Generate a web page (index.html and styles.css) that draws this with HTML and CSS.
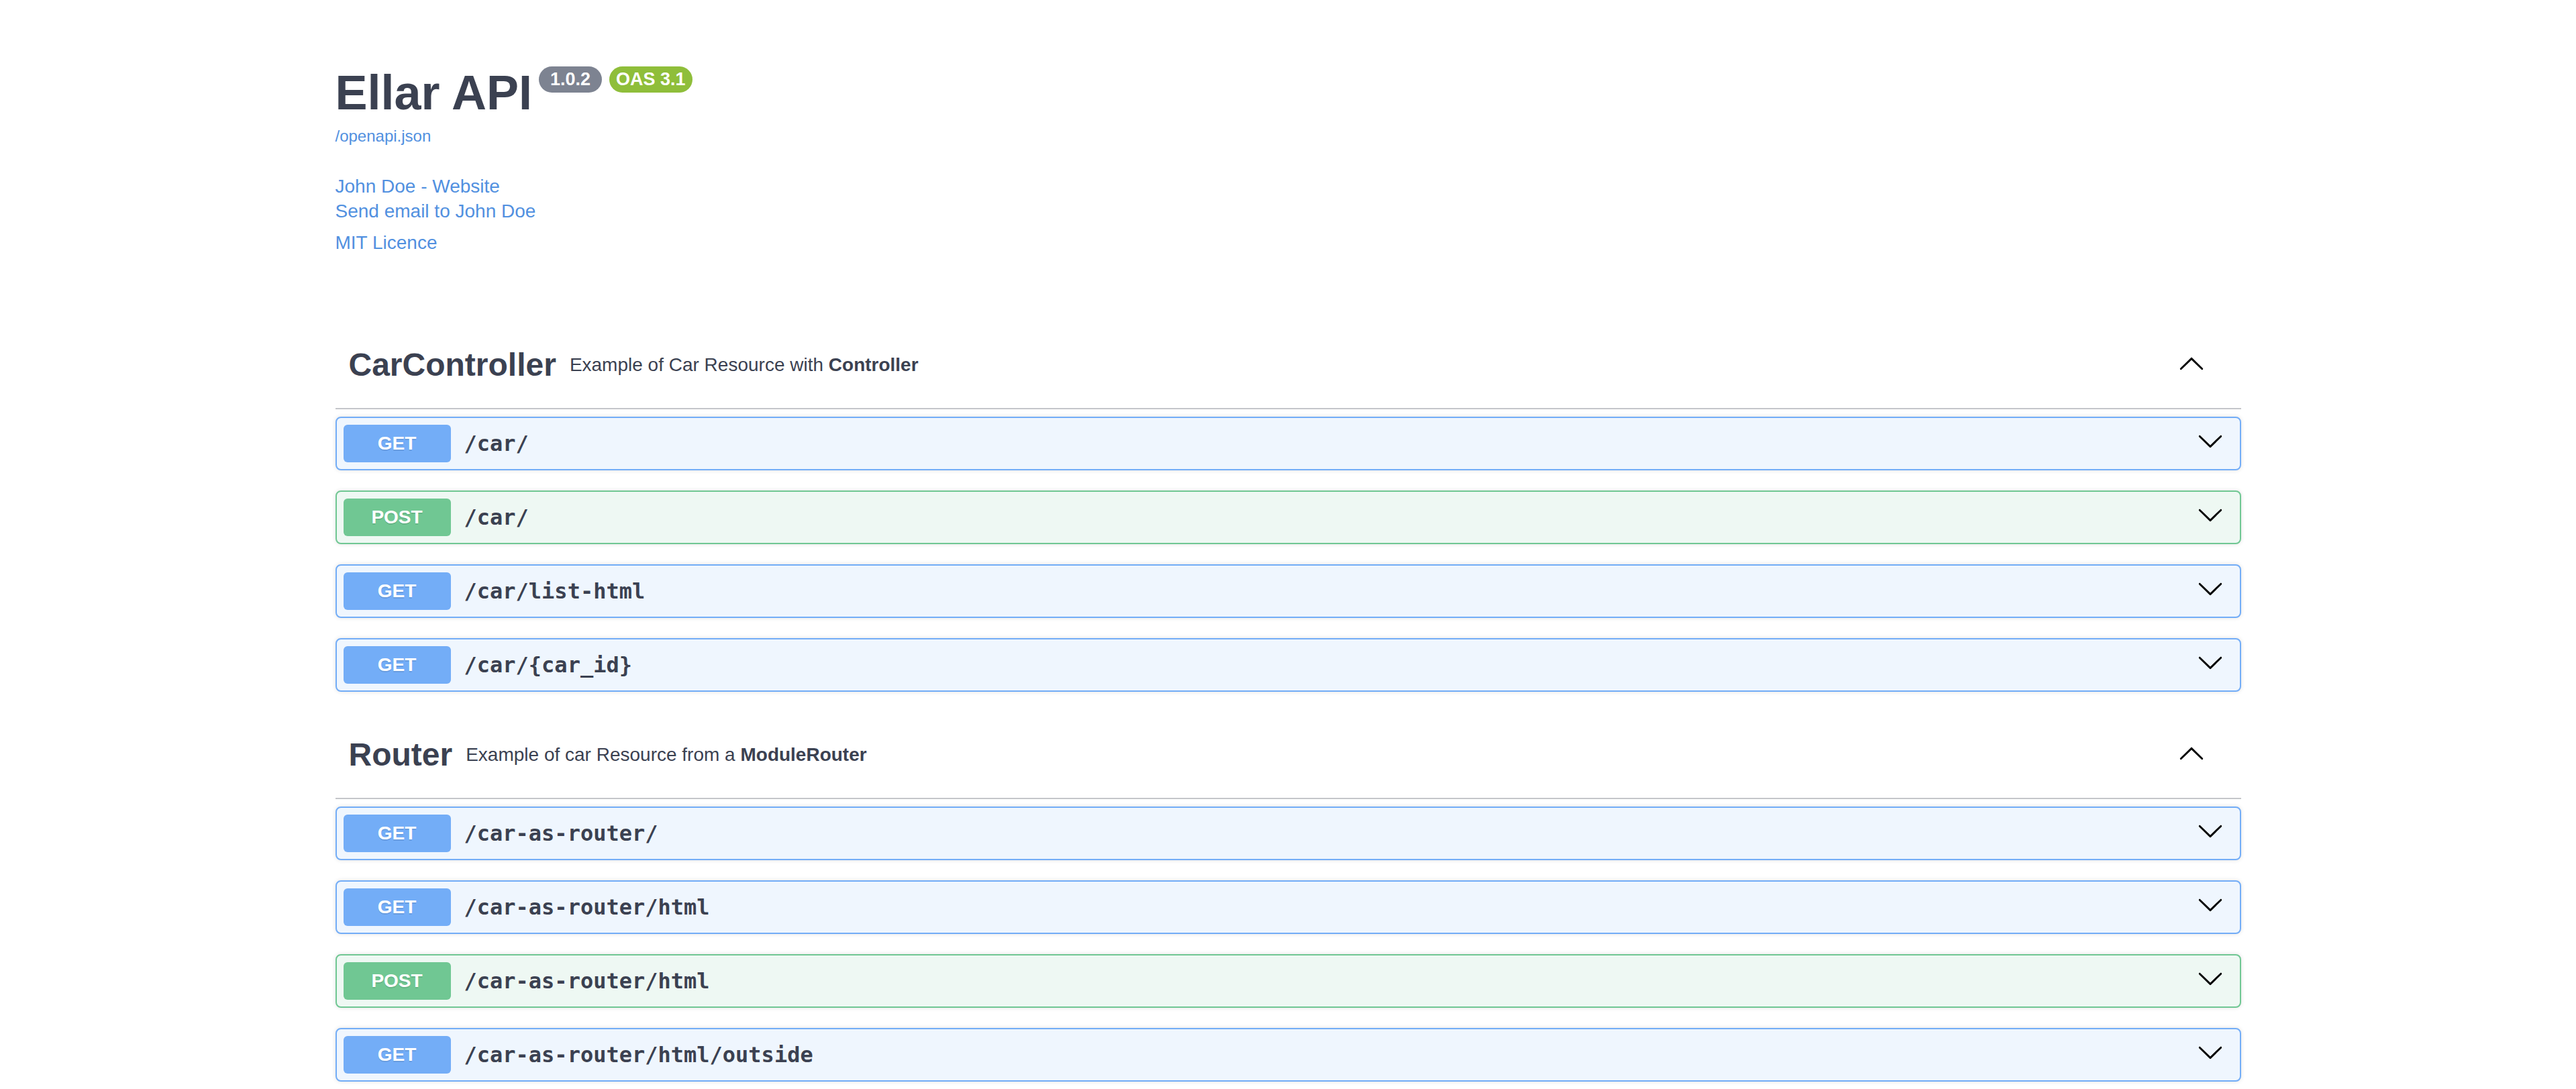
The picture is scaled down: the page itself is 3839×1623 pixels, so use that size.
FILE: index.html
```html
<!DOCTYPE html>
<html lang="en">
<head>
<meta charset="utf-8">
<title>Ellar API</title>
<link rel="stylesheet" href="styles.css">
</head>
<body>
<div class="wrapper">
  <section class="info">
    <div class="title-row">
      <h1 class="title">Ellar API</h1>
      <span class="pill pill-version">1.0.2</span>
      <span class="pill pill-oas">OAS 3.1</span>
    </div>
    <a class="base-url" href="#">/openapi.json</a>
    <div class="contact">
      <a class="link" href="#">John Doe - Website</a>
      <a class="link" href="#">Send email to John Doe</a>
    </div>
    <div class="license">
      <a class="link" href="#">MIT Licence</a>
    </div>
  </section>

  <section class="tag-section">
    <h3 class="tag">
      <span class="tag-name">CarController</span>
      <small class="tag-desc">Example of Car Resource with <b>Controller</b></small>
      <svg class="arrow-up" viewBox="0 0 20 20" width="40" height="40"><path d="M2.582 13.891c-.272.268-.709.268-.979 0s-.271-.701 0-.969l7.908-7.83c.27-.268.707-.268.979 0l7.908 7.83c.27.268.27.701 0 .969-.271.268-.709.268-.979 0L10 6.75l-7.418 7.141z"/></svg>
    </h3>
    <div class="ops">
      <div class="opblock get"><span class="method">GET</span><span class="path">/car/</span><svg class="arrow" viewBox="0 0 20 20" width="40" height="40"><path d="M17.418 6.109c.272-.268.709-.268.979 0s.271.701 0 .969l-7.908 7.83c-.27.268-.707.268-.979 0l-7.908-7.83c-.27-.268-.27-.701 0-.969.271-.268.709-.268.979 0L10 13.25l7.418-7.141z"/></svg></div>
      <div class="opblock post"><span class="method">POST</span><span class="path">/car/</span><svg class="arrow" viewBox="0 0 20 20" width="40" height="40"><path d="M17.418 6.109c.272-.268.709-.268.979 0s.271.701 0 .969l-7.908 7.83c-.27.268-.707.268-.979 0l-7.908-7.83c-.27-.268-.27-.701 0-.969.271-.268.709-.268.979 0L10 13.25l7.418-7.141z"/></svg></div>
      <div class="opblock get"><span class="method">GET</span><span class="path">/car/list-html</span><svg class="arrow" viewBox="0 0 20 20" width="40" height="40"><path d="M17.418 6.109c.272-.268.709-.268.979 0s.271.701 0 .969l-7.908 7.83c-.27.268-.707.268-.979 0l-7.908-7.83c-.27-.268-.27-.701 0-.969.271-.268.709-.268.979 0L10 13.25l7.418-7.141z"/></svg></div>
      <div class="opblock get"><span class="method">GET</span><span class="path">/car/{car_id}</span><svg class="arrow" viewBox="0 0 20 20" width="40" height="40"><path d="M17.418 6.109c.272-.268.709-.268.979 0s.271.701 0 .969l-7.908 7.83c-.27.268-.707.268-.979 0l-7.908-7.83c-.27-.268-.27-.701 0-.969.271-.268.709-.268.979 0L10 13.25l7.418-7.141z"/></svg></div>
    </div>
  </section>

  <section class="tag-section">
    <h3 class="tag">
      <span class="tag-name">Router</span>
      <small class="tag-desc">Example of car Resource from a <b>ModuleRouter</b></small>
      <svg class="arrow-up" viewBox="0 0 20 20" width="40" height="40"><path d="M2.582 13.891c-.272.268-.709.268-.979 0s-.271-.701 0-.969l7.908-7.83c.27-.268.707-.268.979 0l7.908 7.83c.27.268.27.701 0 .969-.271.268-.709.268-.979 0L10 6.75l-7.418 7.141z"/></svg>
    </h3>
    <div class="ops">
      <div class="opblock get"><span class="method">GET</span><span class="path">/car-as-router/</span><svg class="arrow" viewBox="0 0 20 20" width="40" height="40"><path d="M17.418 6.109c.272-.268.709-.268.979 0s.271.701 0 .969l-7.908 7.83c-.27.268-.707.268-.979 0l-7.908-7.83c-.27-.268-.27-.701 0-.969.271-.268.709-.268.979 0L10 13.25l7.418-7.141z"/></svg></div>
      <div class="opblock get"><span class="method">GET</span><span class="path">/car-as-router/html</span><svg class="arrow" viewBox="0 0 20 20" width="40" height="40"><path d="M17.418 6.109c.272-.268.709-.268.979 0s.271.701 0 .969l-7.908 7.83c-.27.268-.707.268-.979 0l-7.908-7.83c-.27-.268-.27-.701 0-.969.271-.268.709-.268.979 0L10 13.25l7.418-7.141z"/></svg></div>
      <div class="opblock post"><span class="method">POST</span><span class="path">/car-as-router/html</span><svg class="arrow" viewBox="0 0 20 20" width="40" height="40"><path d="M17.418 6.109c.272-.268.709-.268.979 0s.271.701 0 .969l-7.908 7.83c-.27.268-.707.268-.979 0l-7.908-7.83c-.27-.268-.27-.701 0-.969.271-.268.709-.268.979 0L10 13.25l7.418-7.141z"/></svg></div>
      <div class="opblock get"><span class="method">GET</span><span class="path">/car-as-router/html/outside</span><svg class="arrow" viewBox="0 0 20 20" width="40" height="40"><path d="M17.418 6.109c.272-.268.709-.268.979 0s.271.701 0 .969l-7.908 7.83c-.27.268-.707.268-.979 0l-7.908-7.83c-.27-.268-.27-.701 0-.969.271-.268.709-.268.979 0L10 13.25l7.418-7.141z"/></svg></div>
    </div>
  </section>
</div>
</body>
</html>
```

FILE: styles.css
```css
html {
  overflow: hidden;
  background: #ffffff;
}

body {
  margin: 0;
  font-family: "Liberation Sans", Arial, Helvetica, sans-serif;
  color: #3b4151;
  background: #ffffff;
}

.wrapper {
  max-width: 2920px;
  margin: 0 auto;
  padding: 0 40px;
  box-sizing: border-box;
}

/* ---------- info ---------- */
.info {
  padding-top: 99px;
  margin-bottom: 100px;
  display: flex;
  flex-direction: column;
  align-items: flex-start;
}

.title-row {
  display: flex;
  align-items: flex-start;
  height: 75px;
}

.title {
  margin: 3px 0 0 0;
  font-size: 72px;
  line-height: 72px;
  font-weight: 700;
  color: #3b4151;
}

.pill {
  height: 39px;
  line-height: 39px;
  border-radius: 20px;
  color: #ffffff;
  font-size: 27px;
  font-weight: 700;
  padding: 0 10px;
}

.pill-version {
  background: #7d8391;
  padding: 0 17px;
  margin-left: 10px;
}

.pill-oas {
  background: #8fbe3a;
  margin-left: 11px;
}

.base-url {
  margin-top: 17px;
  font-size: 24px;
  line-height: 24px;
  color: #5190e0;
  text-decoration: none;
}

.contact {
  margin-top: 44px;
  display: flex;
  flex-direction: column;
}

.license {
  margin-top: 10px;
  display: flex;
  flex-direction: column;
}

.link {
  font-size: 28px;
  line-height: 37px;
  color: #5190e0;
  text-decoration: none;
}

/* ---------- tags ---------- */
.tag {
  margin: 0;
  height: 130px;
  box-sizing: border-box;
  display: flex;
  align-items: center;
  padding: 20px 54px 20px 20px;
  border-bottom: 2px solid rgba(59, 65, 81, 0.3);
  font-weight: 700;
}

.tag-name {
  font-size: 48px;
  line-height: 56px;
  color: #3b4151;
}

.tag-desc {
  flex: 1;
  padding: 0 20px;
  font-size: 28px;
  line-height: 40px;
  font-weight: 400;
  color: #3b4151;
}

.tag-desc b {
  font-weight: 700;
}

.arrow-up {
  display: block;
  fill: #000000;
  margin-bottom: 3px;
}

.ops {
  margin-top: 11px;
}

/* ---------- op blocks ---------- */
.opblock {
  height: 80px;
  box-sizing: border-box;
  display: flex;
  align-items: center;
  border: 2px solid;
  border-radius: 8px;
  padding: 0 24px 0 10px;
  margin-bottom: 30px;
  box-shadow: 0 0 6px rgba(0, 0, 0, 0.12);
}

.opblock.get {
  background: #eff6fe;
  border-color: #73adf7;
}

.opblock.post {
  background: #eef8f3;
  border-color: #70c793;
}

.method {
  width: 160px;
  height: 56px;
  line-height: 56px;
  border-radius: 6px;
  text-align: center;
  color: #ffffff;
  font-size: 28px;
  font-weight: 700;
  text-shadow: 0 2px 0 rgba(0, 0, 0, 0.1);
  flex-shrink: 0;
}

.get .method {
  background: #73adf7;
}

.post .method {
  background: #70c793;
}

.path {
  flex: 1;
  padding: 0 20px;
  font-family: "DejaVu Sans Mono", "Liberation Mono", monospace;
  font-weight: 700;
  font-size: 32px;
  color: #3b4151;
}

.arrow {
  display: block;
  fill: #000000;
  margin-bottom: 8px;
}
```
